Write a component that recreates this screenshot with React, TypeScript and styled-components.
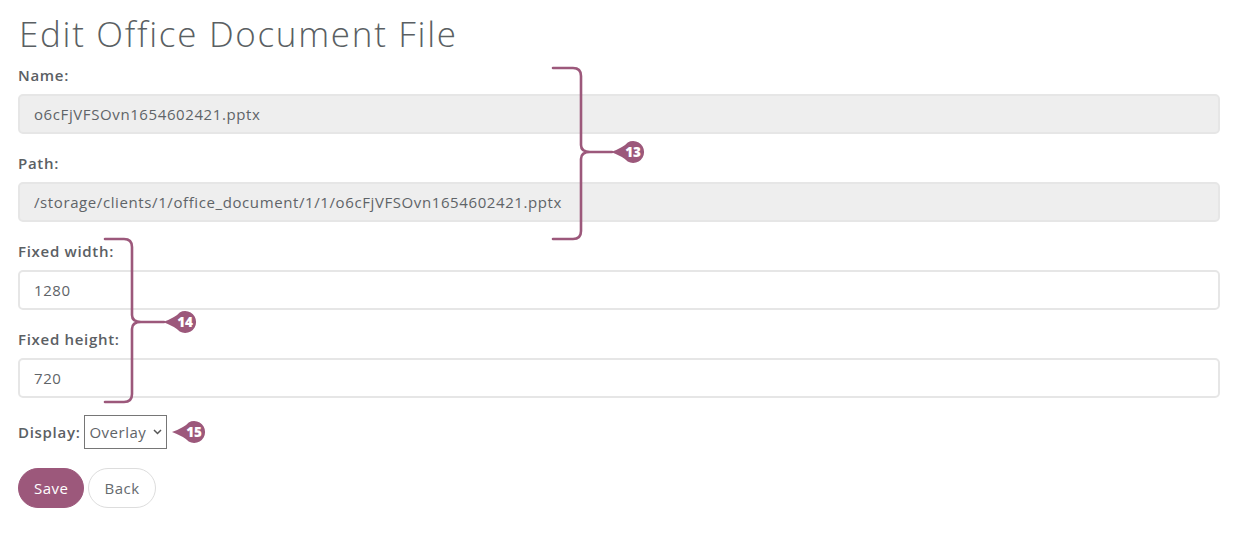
import React from 'react';
import styled, { createGlobalStyle } from 'styled-components';

const GlobalStyle = createGlobalStyle`
  html, body {
    margin: 0;
    padding: 0;
    background: #ffffff;
  }
  body {
    font-family: "Open Sans", "Noto Sans", Arial, sans-serif;
    color: #555b5f;
  }
`;

const ACCENT = '#9c587b';

const Page = styled.div`
  position: relative;
  width: 1249px;
  height: 535px;
  box-sizing: border-box;
  padding: 12px 30px 0 18px;
`;

const Title = styled.h1`
  margin: 0 0 9px 1px;
  font-size: 35px;
  line-height: 43px;
  font-weight: 300;
  color: #5a5f63;
  letter-spacing: 1.7px;
`;

const Field = styled.div`
  display: flex;
  flex-direction: column;
  gap: 8px;
  margin-bottom: 18px;
`;

const Label = styled.label`
  font-size: 15px;
  line-height: 22px;
  font-weight: 600;
  color: #5b6064;
  letter-spacing: 0.7px;
`;

const Input = styled.input<{ $readOnly?: boolean }>`
  box-sizing: border-box;
  width: 1202px;
  height: 40px;
  padding: 0 14px;
  border: 2px solid #e6e6e6;
  border-radius: 5px;
  background: ${p => (p.$readOnly ? '#eeeeee' : '#ffffff')};
  font-family: inherit;
  font-size: 15px;
  color: #5f6468;
  letter-spacing: 0.6px;
  outline: none;
`;

const DisplayRow = styled.div`
  display: flex;
  align-items: center;
  gap: 4px;
  height: 34px;
  margin-top: -1px;
`;

const SelectWrap = styled.span`
  position: relative;
  display: inline-block;
`;

const Select = styled.select`
  appearance: none;
  box-sizing: border-box;
  width: 83px;
  height: 34px;
  padding: 0 18px 0 4px;
  border: 1px solid #767676;
  border-radius: 0;
  background: #ffffff;
  font-family: inherit;
  font-size: 15px;
  letter-spacing: 0.5px;
  color: #5f6468;
`;

const Chevron = styled.svg`
  position: absolute;
  right: 5px;
  top: 14px;
  pointer-events: none;
`;

const Actions = styled.div`
  display: flex;
  gap: 4px;
  margin-top: 19px;
`;

const Button = styled.button<{ $primary?: boolean }>`
  box-sizing: border-box;
  height: 40px;
  padding: 0 15px;
  border-radius: 20px;
  border: 1px solid ${p => (p.$primary ? ACCENT : '#dddddd')};
  background: ${p => (p.$primary ? ACCENT : '#ffffff')};
  color: ${p => (p.$primary ? '#ffffff' : '#666b6f')};
  font-family: inherit;
  font-size: 15px;
  letter-spacing: 0.5px;
`;

const Overlay = styled.svg`
  position: absolute;
  left: 0;
  top: 0;
  pointer-events: none;
`;

function Badge({ tipX, y, n }: { tipX: number; y: number; n: string }) {
  const cx = tipX + 22;
  return (
    <g>
      <path
        d={`M${tipX},${y} Q${cx - 9},${y - 5} ${cx - 5.3},${y - 9.6} A11,11 0 1,1 ${cx - 5.3},${y + 9.6} Q${cx - 9},${y + 5} ${tipX},${y} Z`}
        fill={ACCENT}
      />
      <text
        x={cx}
        y={y + 4.8}
        textAnchor="middle"
        fontFamily='"Open Sans", Arial, sans-serif'
        fontWeight="800"
        fontSize="13.5"
        fill="#ffffff"
        letterSpacing="-0.2"
      >
        {n}
      </text>
    </g>
  );
}

function Bracket({ left, x, top, mid, bottom, end }: { left: number; x: number; top: number; mid: number; bottom: number; end: number }) {
  const d = [
    `M${left},${top} H${x - 8} Q${x},${top} ${x},${top + 8} V${mid - 7} Q${x},${mid} ${x + 9},${mid}`,
    `M${left},${bottom} H${x - 8} Q${x},${bottom} ${x},${bottom - 8} V${mid + 7} Q${x},${mid} ${x + 9},${mid}`,
    `M${x + 9},${mid} H${end}`,
  ].join(' ');
  return <path d={d} fill="none" stroke={ACCENT} strokeWidth="2.6" strokeLinecap="round" />;
}

export default function App() {
  return (
    <>
      <GlobalStyle />
      <Page>
        <Title>Edit Office Document File</Title>

        <Field>
          <Label>Name:</Label>
          <Input $readOnly readOnly value="o6cFjVFSOvn1654602421.pptx" />
        </Field>

        <Field>
          <Label>Path:</Label>
          <Input $readOnly readOnly value="/storage/clients/1/office_document/1/1/o6cFjVFSOvn1654602421.pptx" />
        </Field>

        <Field>
          <Label>Fixed width:</Label>
          <Input defaultValue="1280" />
        </Field>

        <Field>
          <Label>Fixed height:</Label>
          <Input defaultValue="720" />
        </Field>

        <DisplayRow>
          <Label>Display:</Label>
          <SelectWrap>
            <Select defaultValue="overlay">
              <option value="overlay">Overlay</option>
              <option value="inline">Inline</option>
            </Select>
            <Chevron width="9" height="6" viewBox="0 0 9 6">
              <path d="M1 1 L4.5 4.5 L8 1" fill="none" stroke="#555" strokeWidth="1.5" />
            </Chevron>
          </SelectWrap>
        </DisplayRow>

        <Actions>
          <Button $primary>Save</Button>
          <Button>Back</Button>
        </Actions>

        <Overlay width="1249" height="535" viewBox="0 0 1249 535">
          <Bracket left={553} x={581} top={68} mid={152} bottom={239} end={612} />
          <Badge tipX={611} y={152} n="13" />
          <Bracket left={105} x={132} top={239} mid={322} bottom={402} end={164} />
          <Badge tipX={163} y={322} n="14" />
          <Badge tipX={172} y={432} n="15" />
        </Overlay>
      </Page>
    </>
  );
}
